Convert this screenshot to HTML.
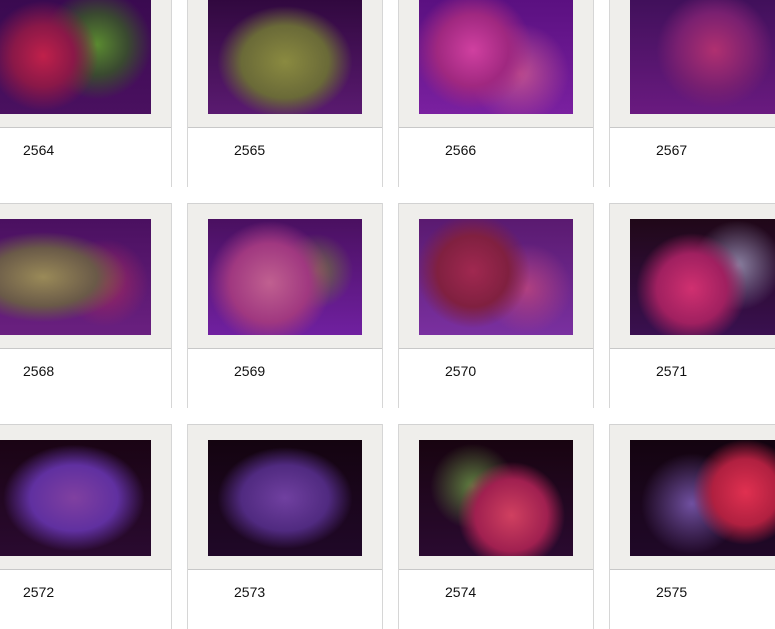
<!DOCTYPE html>
<html><head><meta charset="utf-8"><style>
html,body{margin:0;padding:0;width:775px;height:625px;overflow:hidden;background:#fff;font-family:"Liberation Sans",Arial,sans-serif;}
.card{position:absolute;width:196px;height:205px;border-left:1px solid #d6d6d6;border-right:1px solid #d6d6d6;box-sizing:border-box;}
.box{position:absolute;left:0;top:0;width:194px;height:146px;background:#efeeeb;border-top:1px solid #d2d2d2;border-bottom:1px solid #c8c8c8;box-sizing:border-box;}
.img{position:absolute;left:20px;top:15px;width:154px;height:116px;background:#2a0838;}
.num{position:absolute;left:46px;top:160px;font-size:14px;color:#111;}
</style></head><body>
<div id="g"></div>
<script>
var g=document.getElementById('g');var n=2564;
var grads=[
"radial-gradient(circle at 30% 50%,#c0204a 0,#8a1848 25%,transparent 45%),radial-gradient(circle at 65% 40%,#5a8a30 0,#3a4a30 25%,transparent 45%),linear-gradient(#3a0a50,#4a1060)",
"radial-gradient(ellipse at 50% 55%,#8a8a40 0,#6a6a38 40%,transparent 62%),linear-gradient(#30083e,#5a1a70)",
"radial-gradient(circle at 35% 45%,#d040a0 0,#a02880 30%,transparent 50%),radial-gradient(circle at 65% 65%,#c05090 0,transparent 40%),linear-gradient(#5a1080,#7a20a0)",
"radial-gradient(circle at 55% 45%,#b03070 0,#7a2070 35%,transparent 55%),linear-gradient(#40105a,#6a1a80)",
"radial-gradient(ellipse at 30% 50%,#9a8a58 0,#6a5a48 35%,transparent 55%),radial-gradient(circle at 70% 55%,#a02860 0,transparent 35%),linear-gradient(#4a1060,#6a2080)",
"radial-gradient(circle at 40% 55%,#c06090 0,#a03880 35%,transparent 55%),radial-gradient(circle at 70% 45%,#707040 0,transparent 30%),linear-gradient(#4a1060,#7020a0)",
"radial-gradient(circle at 35% 45%,#a02850 0,#802040 30%,transparent 48%),radial-gradient(circle at 70% 60%,#b04080 0,transparent 35%),linear-gradient(#5a1a70,#7a30a0)",
"radial-gradient(circle at 40% 60%,#d03070 0,#a02060 30%,transparent 48%),radial-gradient(circle at 70% 40%,#8a80a0 0,transparent 35%),linear-gradient(#200818,#3a1050)",
"radial-gradient(ellipse at 50% 50%,#8040a0 0,#6030a0 40%,transparent 65%),linear-gradient(#1a0414,#2a0a30)",
"radial-gradient(ellipse at 50% 50%,#7040a0 0,#502a80 40%,transparent 62%),linear-gradient(#140410,#200828)",
"radial-gradient(circle at 60% 65%,#d04060 0,#a02050 30%,transparent 45%),radial-gradient(circle at 35% 40%,#608040 0,transparent 35%),linear-gradient(#180410,#2a0a30)",
"radial-gradient(circle at 75% 45%,#e03050 0,#b02040 25%,transparent 40%),radial-gradient(circle at 40% 55%,#7050a0 0,transparent 45%),linear-gradient(#140410,#200828)"];
var h='';
for(var r=0;r<3;r++)for(var c=0;c<4;c++){
var x=-24+c*211,y=-18+r*221;
h+='<div class="card" style="left:'+x+'px;top:'+y+'px"><div class="box"><div class="img" style="background:'+grads[r*4+c]+'"></div></div><div class="num">'+(n++)+'</div></div>';
}
g.innerHTML=h;
</script>
</body></html>
